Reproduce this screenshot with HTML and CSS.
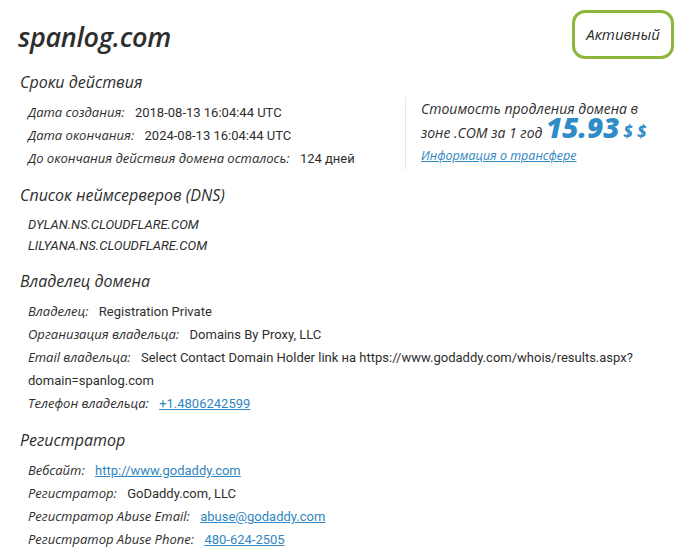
FILE: index.html
```html
<!DOCTYPE html>
<html lang="ru">

<head>
	<meta charset="UTF-8">
	<meta name="viewport" content="width=device-width, initial-scale=1.0">
	<title>spanlog.com</title>
	<link rel="stylesheet" href="styles.css">
</head>

<body>
	<div class="header">
		<h1 class="domain">spanlog.com</h1>
		<div class="status">Активный</div>
	</div>

	<div class="section first">
		<h2>Сроки действия</h2>
		<div class="dates">
			<div class="list">
				<div class="row"><span class="label">Дата создания:</span> <span class="value">2018-08-13 16:04:44 UTC</span></div>
				<div class="row"><span class="label">Дата окончания:</span> <span class="value">2024-08-13 16:04:44 UTC</span></div>
				<div class="row"><span class="label">До окончания действия домена осталось:</span> <span class="value">124 дней</span></div>
			</div>
			<div class="price">
				<p>Стоимость продления домена в зоне .COM за 1 год <span class="sum">15.93</span> <span class="cur">$ $</span></p>
				<a href="#" class="transfer">Информация о трансфере</a>
			</div>
		</div>
	</div>

	<div class="section">
		<h2>Список неймсерверов (DNS)</h2>
		<div class="list">
			<div class="row ns">DYLAN.NS.CLOUDFLARE.COM</div>
			<div class="row ns">LILYANA.NS.CLOUDFLARE.COM</div>
		</div>
	</div>

	<div class="section">
		<h2>Владелец домена</h2>
		<div class="list">
			<div class="row"><span class="label">Владелец:</span> <span class="value">Registration Private</span></div>
			<div class="row"><span class="label">Организация владельца:</span> <span class="value">Domains By Proxy, LLC</span></div>
			<div class="row"><span class="label">Email владельца:</span> <span class="value">Select Contact Domain Holder link на https://www.godaddy.com/whois/results.aspx?domain=spanlog.com</span></div>
			<div class="row"><span class="label">Телефон владельца:</span> <a href="#" class="value">+1.4806242599</a></div>
		</div>
	</div>

	<div class="section">
		<h2>Регистратор</h2>
		<div class="list">
			<div class="row"><span class="label">Вебсайт:</span> <a href="#" class="value">http://www.godaddy.com</a></div>
			<div class="row"><span class="label">Регистратор:</span> <span class="value">GoDaddy.com, LLC</span></div>
			<div class="row"><span class="label">Регистратор Abuse Email:</span> <a href="#" class="value">abuse@godaddy.com</a></div>
			<div class="row"><span class="label">Регистратор Abuse Phone:</span> <a href="#" class="value">480-624-2505</a></div>
		</div>
	</div>
</body>

</html>
```

FILE: styles.css
```css
body {
	margin: 0;
	padding: 10px 7px 0 18px;
	font-family: "Open Sans", sans-serif;
	color: #2e2e2e;
	background: #fff;
}

.header {
	display: flex;
	justify-content: space-between;
	align-items: flex-start;
}

.domain {
	margin: 8px 0 0;
	font-size: 27px;
	font-style: italic;
	font-weight: 600;
	letter-spacing: -0.3px;
}

.status {
	border: 3px solid #8fb63c;
	border-radius: 13px;
	padding: 11px 11px 12px;
	font-size: 15px;
	font-style: italic;
}

.section {
	margin-bottom: 14px;
}

.section.first {
	margin-top: 12px;
}

h2 {
	margin: 0 0 8px 2px;
	font-size: 16px;
	font-style: italic;
	font-weight: 400;
}

.list {
	padding-left: 10px;
}

.row {
	font-size: 13px;
	line-height: 23px;
}

.label {
	font-style: italic;
	margin-right: 7px;
}

.value {
	font-family: Roboto, sans-serif;
	font-size: 13px;
}

a.value,
.transfer {
	color: #2f86c0;
}

.ns {
	font-family: Roboto, sans-serif;
	font-style: italic;
	line-height: 21px;
}

.dates {
	display: flex;
	align-items: flex-start;
}

.dates .list {
	flex: none;
	width: 377px;
}

.price {
	flex: none;
	width: 240px;
	border-left: 1px solid #e8e8e8;
	padding: 0 0 6px 15px;
	margin-top: -4px;
}

.price p {
	margin: 0;
	font-size: 14px;
	font-style: italic;
	font-weight: 500;
	line-height: 24px;
}

.sum {
	font-size: 28px;
	font-weight: 800;
	line-height: 0;
	color: #2f8cc6;
}

.cur {
	font-size: 17px;
	color: #2f8cc6;
	font-weight: 700;
	line-height: 0;
}

.transfer {
	display: block;
	margin-top: 2px;
	font-size: 12.5px;
	font-style: italic;
}
```
